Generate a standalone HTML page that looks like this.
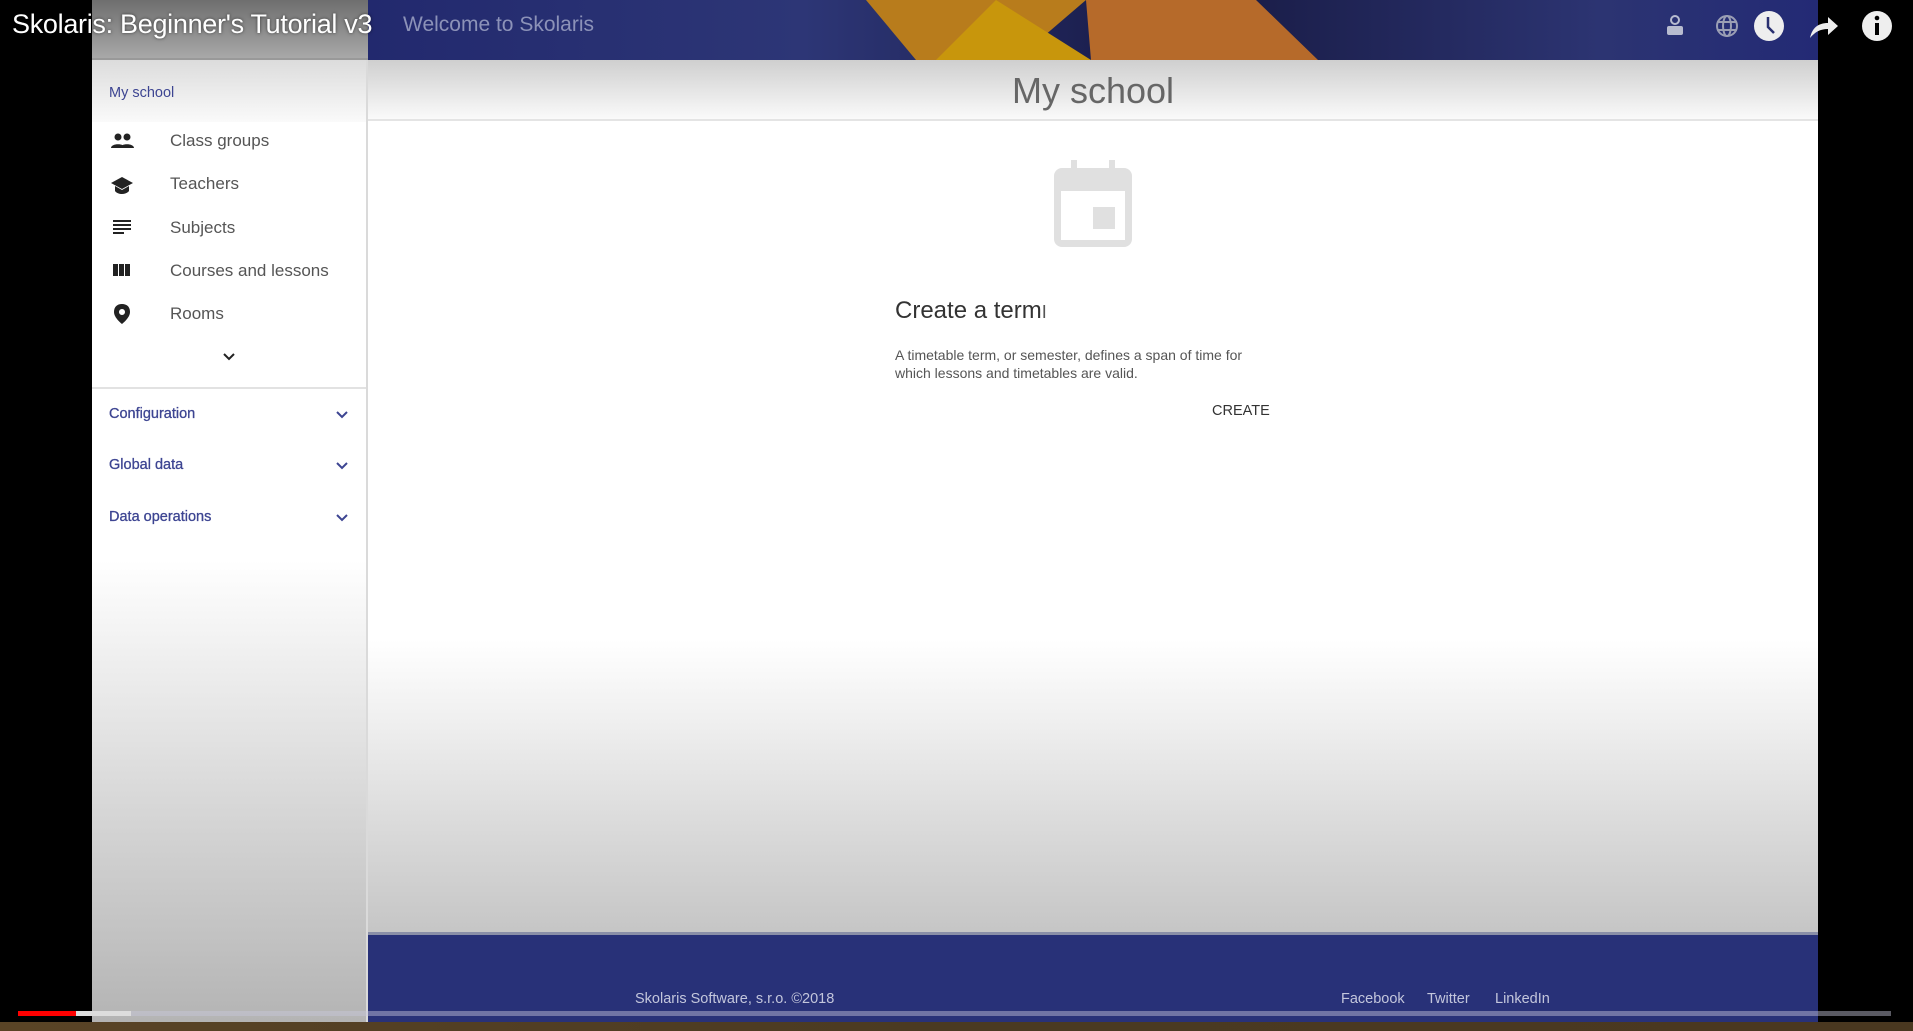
<!DOCTYPE html>
<html><head><meta charset="utf-8"><style>
*{margin:0;padding:0;box-sizing:border-box}
body{width:1913px;height:1031px;overflow:hidden;background:#000;font-family:"Liberation Sans",sans-serif;position:relative}
.abs{position:absolute}
#side{left:92px;top:0;width:276px;height:1022px;background:linear-gradient(#fff 0,#fff 560px,#b4b4b4 1022px);border-right:2px solid #dadada}
#sidetop{left:92px;top:0;width:276px;height:60px;background:linear-gradient(#6e6e6e,#a8a8a8);border-bottom:2px solid #999}
#sidehdr{left:92px;top:60px;width:274px;height:62px;background:linear-gradient(#dcdcdc,#fafafa)}
#main{left:368px;top:60px;width:1450px;height:872px;background:linear-gradient(#fff 0,#fff 580px,#c6c6c6 870px)}
#top{left:368px;top:0;width:1450px;height:60px;background:linear-gradient(90deg,#22296e,#2d3676 30%,#1c2050 50%,#1a1d48 60%,#2c3472 85%,#232a75)}
#hdr{left:368px;top:60px;width:1450px;height:61px;background:linear-gradient(#cfcfcf,#fafafa);border-bottom:2px solid #e4e4e4}
.nav{position:absolute;left:170px;font-size:17px;color:#555}
.ico{position:absolute;left:110px}
.grp{position:absolute;left:109px;font-size:14.5px;color:#3d4592;-webkit-text-stroke:0.3px #3d4592}
.chev{position:absolute;left:335px}
#foot{left:368px;top:932px;width:1450px;height:90px;background:#283178;border-top:3px solid #8a8fa8}
.ft{position:absolute;top:991px;font-size:14.5px;color:#c3c6dc}
</style></head><body>
<div class="abs" id="side"></div>
<div class="abs" id="sidetop"></div>
<div class="abs" id="sidehdr"></div>
<div class="abs" id="top"></div>
<svg class="abs" style="left:866px;top:0" width="452" height="60"><polygon points="0,0 220,0 150,60 50,60" fill="#b87c1c"/><polygon points="130,0 70,60 225,60" fill="#c8960c"/><polygon points="220,0 390,0 452,60 225,60" fill="#b66a2a"/></svg>
<div class="abs" id="main"></div>
<div class="abs" id="hdr"></div>
<div class="abs" style="left:1093px;top:70px;transform:translateX(-50%);font-size:36px;color:#666;white-space:nowrap">My school</div>
<div class="abs" style="left:12px;top:9px;font-size:27px;color:#fff;white-space:nowrap;text-shadow:0 0 3px rgba(0,0,0,.6);letter-spacing:-0.3px">Skolaris: Beginner's Tutorial v3</div>
<div class="abs" style="left:403px;top:13px;font-size:21px;color:#8c92b8;white-space:nowrap">Welcome to Skolaris</div>
<svg class="abs" style="left:1660px;top:8px" width="240" height="38">
<g fill="#b8bcd0"><circle cx="15" cy="12" r="4" fill="none" stroke="#b8bcd0" stroke-width="2"/><rect x="7" y="18" width="16" height="9" rx="2"/></g>
<g fill="none" stroke="#9a9eb4" stroke-width="2"><circle cx="67" cy="18" r="10"/><ellipse cx="67" cy="18" rx="4" ry="10"/><line x1="57" y1="14" x2="77" y2="14"/><line x1="57" y1="22" x2="77" y2="22"/></g>
<circle cx="109" cy="18" r="15" fill="#eee"/><path d="M108 9 V19 L114 25" stroke="#2a3070" stroke-width="2.5" fill="none"/>
<path d="M150 30 C152 20 158 15 168 15 V9 L178 18 L168 27 V21 C160 21 155 24 150 30Z" fill="#eee"/>
<circle cx="217" cy="18" r="15" fill="#eee"/><rect x="215" y="15" width="4" height="12" fill="#000"/><circle cx="217" cy="10" r="2.3" fill="#000"/>
</svg>
<div class="abs" style="left:109px;top:85px;font-size:14.5px;color:#3d4592">My school</div>
<svg class="ico" style="top:132px" width="26" height="200" viewBox="0 0 26 200">
<g fill="#222">
<circle cx="8" cy="5" r="3.5"/><circle cx="17" cy="5" r="3.5"/><path d="M1 16 C1 11 15 11 15 16Z M10 16 C10 11 24 11 24 16Z"/>
<path d="M12 45 L1 51 L12 57 L23 51Z"/><path d="M5 54 V59 C8 63 16 63 19 59 V54 L12 58Z"/>
<rect x="3" y="88" width="18" height="2"/><rect x="3" y="92" width="18" height="2"/><rect x="3" y="96" width="18" height="2"/><rect x="3" y="100" width="11" height="2"/>
<rect x="3" y="132" width="5" height="12"/><rect x="9" y="132" width="5" height="12"/><rect x="15" y="132" width="5" height="12"/>
<path d="M12 172 C7 172 4 175 4 180 C4 186 12 192 12 192 C12 192 20 186 20 180 C20 175 17 172 12 172Z M12 177 A3 3 0 1 0 12.01 177Z" fill-rule="evenodd"/>
</g></svg>
<div class="nav" style="top:131px">Class groups</div>
<div class="nav" style="top:174px">Teachers</div>
<div class="nav" style="top:218px">Subjects</div>
<div class="nav" style="top:261px">Courses and lessons</div>
<div class="nav" style="top:304px">Rooms</div>
<svg class="abs" style="left:223px;top:353px" width="12" height="8"><path d="M1 1 L6 6 L11 1" stroke="#222" stroke-width="2" fill="none"/></svg>
<div class="abs" style="left:92px;top:387px;width:274px;height:2px;background:#e2e2e2"></div>
<div class="grp" style="top:406px">Configuration</div>
<div class="grp" style="top:457px">Global data</div>
<div class="grp" style="top:509px">Data operations</div>
<svg class="chev" style="top:410px" width="14" height="120"><g stroke="#3d4592" stroke-width="2" fill="none"><path d="M2 2 L7 7 L12 2"/><path d="M2 53 L7 58 L12 53"/><path d="M2 105 L7 110 L12 105"/></g></svg>
<svg class="abs" style="left:1054px;top:160px" width="78" height="87"><rect x="17" y="0" width="6" height="12" fill="#e0e0e0"/><rect x="55" y="0" width="6" height="12" fill="#e0e0e0"/><path d="M8 8 H70 A8 8 0 0 1 78 16 V79 A8 8 0 0 1 70 87 H8 A8 8 0 0 1 0 79 V16 A8 8 0 0 1 8 8Z M7 31 V80 H71 V31Z" fill="#e0e0e0" fill-rule="evenodd"/><rect x="39" y="47" width="22" height="22" fill="#e0e0e0"/></svg>
<div class="abs" style="left:895px;top:297px;font-size:24px;color:#333;white-space:nowrap">Create a term<span style="font-size:18px;color:#555">I</span></div>
<div class="abs" style="left:895px;top:346px;font-size:14px;line-height:18px;color:#555;width:400px">A timetable term, or semester, defines a span of time for<br>which lessons and timetables are valid.</div>
<div class="abs" style="left:1212px;top:403px;font-size:14.5px;color:#333">CREATE</div>
<div class="abs" id="foot"></div>
<div class="ft" style="left:635px">Skolaris Software, s.r.o. ©2018</div>
<div class="ft" style="left:1341px">Facebook</div>
<div class="ft" style="left:1427px">Twitter</div>
<div class="ft" style="left:1495px">LinkedIn</div>
<div class="abs" style="left:18px;top:1011px;width:1873px;height:5px;background:rgba(200,200,220,.45)"></div>
<div class="abs" style="left:18px;top:1011px;width:113px;height:5px;background:#ddd"></div>
<div class="abs" style="left:18px;top:1011px;width:58px;height:5px;background:#f00"></div>
<div class="abs" style="left:0;top:1022px;width:1913px;height:9px;background:linear-gradient(90deg,#5a4426,#4a3a22 50%,#4a3820)"></div>
</body></html>
